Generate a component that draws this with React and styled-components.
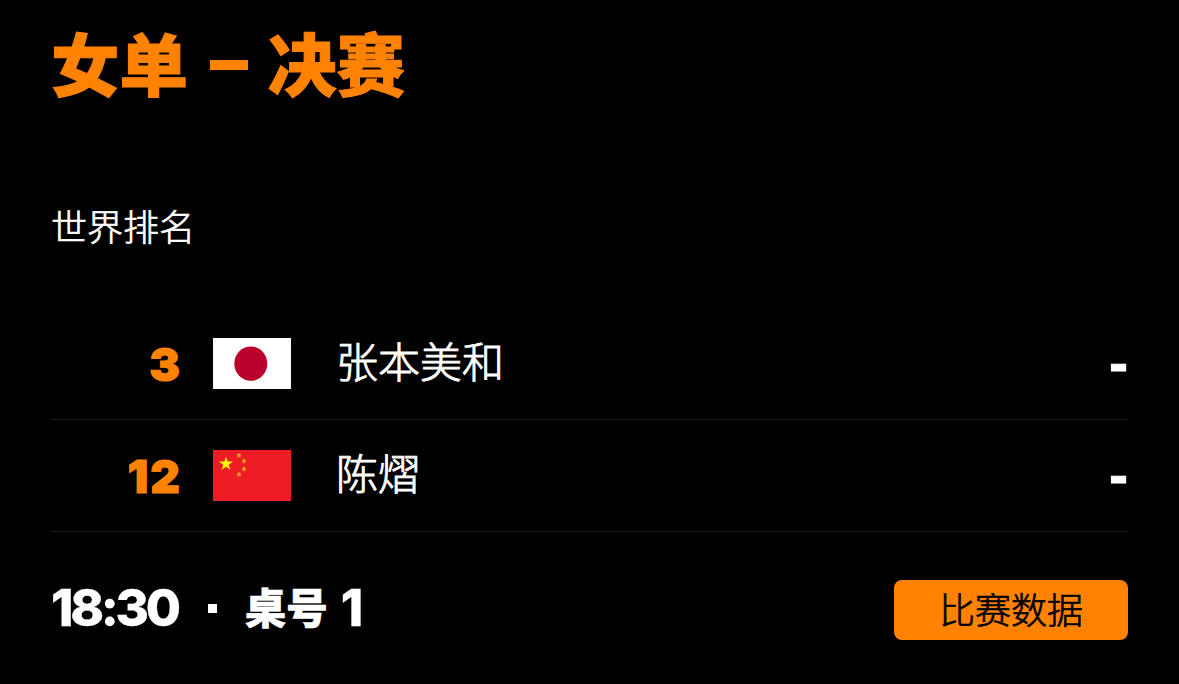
import React from "react";
import styled, { createGlobalStyle } from "styled-components";

const players = [
  { rank: 3, country: "jp", name: "张本美和", score: "-" },
  { rank: 12, country: "cn", name: "陈熠", score: "-" },
];

const smallStars = [
  { x: 26, y: 5.5 },
  { x: 31, y: 11 },
  { x: 31, y: 19 },
  { x: 26, y: 24.5 },
];

const starPoints =
  "0,-1 0.225,-0.309 0.951,-0.309 0.363,0.118 0.588,0.809 0,0.382 -0.588,0.809 -0.363,0.118 -0.951,-0.309 -0.225,-0.309";

function Flag({ country }) {
  if (country === "jp") {
    return (
      <FlagImage viewBox="0 0 78 51">
        <rect width="78" height="51" fill="#ffffff" />
        <ellipse cx="37.8" cy="25.6" rx="16.5" ry="17.2" fill="#bc002d" />
      </FlagImage>
    );
  }
  return (
    <FlagImage viewBox="0 0 78 51">
      <rect width="78" height="51" fill="#ee1c25" />
      <polygon
        points={starPoints}
        fill="#ffff00"
        transform="translate(13 13.8) scale(7.4)"
      />
      {smallStars.map(({ x, y }, index) => (
        <polygon
          key={index}
          points={starPoints}
          fill="#ffb020"
          stroke="#ffb020"
          strokeWidth="0.3"
          transform={`translate(${x} ${y}) scale(2.2)`}
        />
      ))}
    </FlagImage>
  );
}

export default function App() {
  return (
    <Container>
      <GlobalStyle />
      <Title>
        女单<Dash>–</Dash>决赛
      </Title>
      <RankingLabel>世界排名</RankingLabel>
      <Players>
        {players.map(({ rank, country, name, score }) => (
          <PlayerRow key={rank}>
            <Rank>{rank}</Rank>
            <Flag country={country} />
            <Name>{name}</Name>
            <Score>{score}</Score>
          </PlayerRow>
        ))}
      </Players>
      <Footer>
        <Schedule>
          <Time>18:30</Time>
          <Dot />
          <Table>桌号</Table>
          <Time>1</Time>
        </Schedule>
        <DataButton>比赛数据</DataButton>
      </Footer>
    </Container>
  );
}

const GlobalStyle = createGlobalStyle`
  * {
    box-sizing: border-box;
  }
  body {
    margin: 0;
    background-color: #000000;
    font-family: "Noto Sans CJK SC", sans-serif;
  }
`;
const Container = styled.div`
  width: 100%;
  height: 684px;
  padding: 26px 51px 0 51px;
  background-color: #000000;
  color: #ffffff;
`;
const Title = styled.h1`
  margin: 0;
  height: 80px;
  line-height: 71px;
  font-size: 68.5px;
  font-weight: 900;
  color: #ff8200;
  white-space: nowrap;
  -webkit-text-stroke: 1px #ff8200;
`;
const Dash = styled.span`
  margin: 0 20px 0 22px;
  line-height: 0;
  vertical-align: 4px;
  font-family: Inter, sans-serif;
  font-size: 76px;
  font-weight: 800;
  -webkit-text-stroke: 0;
`;
const RankingLabel = styled.p`
  margin: 99px 0 0 0;
  height: 40px;
  line-height: 40px;
  font-size: 36px;
  font-weight: 300;
  -webkit-text-stroke: 0.7px #ffffff;
`;
const Players = styled.div`
  margin-top: 63px;
`;
const PlayerRow = styled.div`
  display: flex;
  align-items: center;
  height: 112px;
  border-bottom: 1px solid #1c1c1c;
`;
const Rank = styled.span`
  width: 131px;
  margin-right: 31px;
  line-height: 50px;
  text-align: right;
  font-family: Inter, sans-serif;
  font-size: 46px;
  font-weight: 900;
  letter-spacing: 2px;
  color: #ff8200;
  -webkit-text-stroke: 1px #ff8200;
`;
const FlagImage = styled.svg`
  display: block;
  width: 78px;
  height: 51px;
`;
const Name = styled.span`
  margin-left: 45px;
  padding-bottom: 8px;
  line-height: 50px;
  font-size: 42px;
  font-weight: 300;
  -webkit-text-stroke: 0.9px #ffffff;
`;
const Score = styled.span`
  margin-left: auto;
  padding-bottom: 2px;
  line-height: 50px;
  font-family: "Liberation Sans", sans-serif;
  font-size: 56px;
  font-weight: 700;
  -webkit-text-stroke: 1px #ffffff;
`;
const Footer = styled.div`
  display: flex;
  align-items: flex-start;
  justify-content: space-between;
  height: 60px;
  margin-top: 48px;
`;
const Schedule = styled.div`
  display: flex;
  align-items: center;
  height: 56px;
  line-height: 54px;
`;
const Time = styled.span`
  font-family: Inter, sans-serif;
  font-size: 51px;
  font-weight: 800;
  letter-spacing: -3.3px;
  -webkit-text-stroke: 0.3px #ffffff;
`;
const Dot = styled.span`
  width: 9px;
  height: 9px;
  margin: 0 28px 0 30px;
  background-color: #ffffff;
`;
const Table = styled.span`
  margin-right: 13px;
  padding-bottom: 5px;
  font-size: 41.5px;
  font-weight: 900;
  -webkit-text-stroke: 0.5px #ffffff;
`;
const DataButton = styled.button`
  width: 234px;
  height: 60px;
  padding: 0 0 4px 0;
  border: none;
  border-radius: 8px;
  background-color: #ff8200;
  color: #000000;
  font-family: "Noto Sans CJK SC", sans-serif;
  font-size: 36px;
  font-weight: 300;
  line-height: 56px;
  cursor: pointer;
  -webkit-text-stroke: 0.7px #000000;
`;
